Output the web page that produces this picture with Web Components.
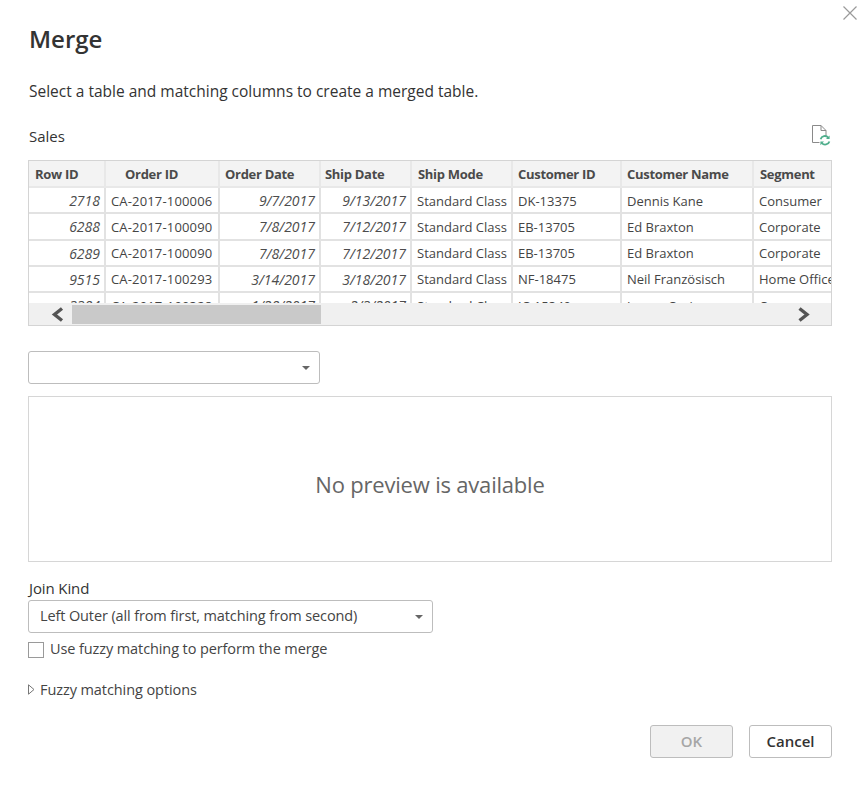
<!DOCTYPE html>
<html>
<head>
<meta charset="utf-8">
<title>Merge</title>
<style>
  html, body { margin: 0; padding: 0; background: #fff; }
  body { font-family: "Open Sans", "Noto Sans", sans-serif; color: #333; }
</style>
</head>
<body>
<merge-dialog heading="Merge" note="Select a table and matching columns to create a merged table.">
  <span slot="source">Sales</span>
  <data-preview slot="table"></data-preview>
  <combo-box slot="column" style="width:292px"></combo-box>
  <combo-box slot="kind" style="width:405px" value="Left Outer (all from first, matching from second)"></combo-box>
  <check-row slot="fuzzy" label="Use fuzzy matching to perform the merge"></check-row>
  <disclosure-row slot="options" label="Fuzzy matching options"></disclosure-row>
  <dialog-button slot="actions" disabled>OK</dialog-button>
  <dialog-button slot="actions">Cancel</dialog-button>
</merge-dialog>

<script>
const COLS = [
  { name: 'Row ID', w: 77, num: true, head: 6 },
  { name: 'Order ID', w: 114, head: 19, code: true },
  { name: 'Order Date', w: 101, num: true, head: 5 },
  { name: 'Ship Date', w: 91, num: true, head: 4 },
  { name: 'Ship Mode', w: 101, head: 6 },
  { name: 'Customer ID', w: 109, head: 5 },
  { name: 'Customer Name', w: 132, head: 5 },
  { name: 'Segment', w: 110, head: 6 }
];
const ROWS = [
  ['2718', 'CA-2017-100006', '9/7/2017', '9/13/2017', 'Standard Class', 'DK-13375', 'Dennis Kane', 'Consumer'],
  ['6288', 'CA-2017-100090', '7/8/2017', '7/12/2017', 'Standard Class', 'EB-13705', 'Ed Braxton', 'Corporate'],
  ['6289', 'CA-2017-100090', '7/8/2017', '7/12/2017', 'Standard Class', 'EB-13705', 'Ed Braxton', 'Corporate'],
  ['9515', 'CA-2017-100293', '3/14/2017', '3/18/2017', 'Standard Class', 'NF-18475', 'Neil Französisch', 'Home Office'],
  ['3384', 'CA-2017-100328', '1/28/2017', '2/3/2017', 'Standard Class', 'JC-15340', 'Jasper Cacioppo', 'Consumer']
];

class MergeDialog extends HTMLElement {
  constructor() {
    super();
    this.attachShadow({mode: 'open'});
    this.shadowRoot.innerHTML = `
    <style>
      :host { display: block; position: relative; box-sizing: border-box; width: 862px; height: 790px; padding: 0 30px 0 28px; }
      h1 { margin: 0; padding: 20px 0 0 1px; height: 37px; line-height: 37px; font-size: 24px; font-weight: 600; color: #333; }
      .note { margin-top: 23px; padding-left: 1px; height: 22px; line-height: 22px; font-size: 15.5px; }
      .source { margin-top: 22px; padding-left: 1px; height: 24px; display: flex; justify-content: space-between; align-items: center; font-size: 15px; }
      .source svg { display: block; margin: -2px 1px 0 0; }
      .table { margin-top: 12px; }
      .column { margin-top: 25px; }
      .preview { margin-top: 12px; box-sizing: border-box; height: 166px; padding-top: 10px; border: 1px solid #d6d6d6; display: flex; align-items: center; justify-content: center; font-size: 22px; color: #666; letter-spacing: -.2px; }
      .kind-label { margin-top: 15px; padding-left: 1px; height: 22px; line-height: 22px; font-size: 15px; letter-spacing: -.12px; }
      .kind { margin-top: 1px; }
      .fuzzy { margin-top: 6px; }
      .options { margin-top: 19px; }
      .actions { margin-top: 25px; display: flex; justify-content: flex-end; gap: 16px; }
      .close { position: absolute; top: 6px; right: 5px; width: 14px; height: 14px; display: block; }
    </style>
    <svg class="close" viewBox="0 0 14 14"><path d="M.5.5l13 13M13.5.5l-13 13" fill="none" stroke="#9a9a9a" stroke-width="1.2"/></svg>
    <h1></h1>
    <div class="note"></div>
    <div class="source">
      <slot name="source"></slot>
      <svg width="19" height="21" viewBox="0 0 19 21">
        <path d="M.5.5h8.5l5 5v6M9 .5v5h5M.5.5v17h7" fill="none" stroke="#8a8a8a"/>
        <path d="M8.6 14.2a4.4 4.4 0 0 1 7.6-1.6M17.4 16.4a4.4 4.4 0 0 1-7.6 1.6" fill="none" stroke="#4fae8c" stroke-width="1.8"/>
        <path d="M17.6 10.4v3.6H14zM8.4 20.2v-3.6H12z" fill="#4fae8c"/>
      </svg>
    </div>
    <div class="table"><slot name="table"></slot></div>
    <div class="column"><slot name="column"></slot></div>
    <div class="preview">No preview is available</div>
    <div class="kind-label">Join Kind</div>
    <div class="kind"><slot name="kind"></slot></div>
    <div class="fuzzy"><slot name="fuzzy"></slot></div>
    <div class="options"><slot name="options"></slot></div>
    <div class="actions"><slot name="actions"></slot></div>
    `;
  }

  connectedCallback() {
    this.shadowRoot.querySelector('h1').textContent = this.getAttribute('heading');
    this.shadowRoot.querySelector('.note').textContent = this.getAttribute('note');
  }
}

class DataPreview extends HTMLElement {
  constructor() {
    super();
    this.attachShadow({mode: 'open'});
    const template = COLS.map(c => c.w + 'px').join(' ');
    const head = COLS.map(c => `<div class="th" style="padding-left:${c.head}px">${c.name}</div>`).join('');
    const body = ROWS.map(r => r.map((v, i) =>
      `<div class="td${COLS[i].num ? ' num' : ''}${COLS[i].code ? ' code' : ''}">${v}</div>`).join('')).join('');
    this.shadowRoot.innerHTML = `
    <style>
      :host { display: block; box-sizing: border-box; width: 804px; height: 166px; border: 1px solid #d4d4d4; font-size: 13px; color: #444; }
      .view { height: 142px; overflow: hidden; }
      .grid { display: grid; grid-template-columns: ${template}; grid-auto-rows: 26.25px; grid-template-rows: 27px; width: max-content; }
      .th, .td { box-sizing: border-box; white-space: nowrap; overflow: hidden; border-right: 2px solid #e2e2e2; border-bottom: 2px solid #e2e2e2; display: flex; align-items: center; }
      .th { padding-top: 1px; background: #f3f3f3; font-weight: 700; color: #4a4a4a; letter-spacing: -.3px; border-right-color: #e8e8e8; border-bottom-color: #e8e8e8; }
      .td { padding: 1px 4px 0 5px; }
      .num { justify-content: flex-end; font-style: italic; font-size: 14px; color: #4c4c4c; }
      .code { letter-spacing: .16px; }
      .bar { height: 22px; background: #f0f0f0; display: flex; align-items: center; }
      .bar svg { display: block; flex: none; }
      .thumb { width: 249px; height: 19px; background: #c9c9c9; flex: none; }
      .spacer { flex: 1; }
    </style>
    <div class="view"><div class="grid">${head}${body}</div></div>
    <div class="bar">
      <svg width="43" height="22" viewBox="0 0 43 22"><path d="M33 5.5l-7.5 6 7.5 6" fill="none" stroke="#555" stroke-width="3.4"/></svg>
      <div class="thumb"></div>
      <div class="spacer"></div>
      <svg width="43" height="22" viewBox="0 0 43 22"><path d="M11.5 5.5l7.5 6-7.5 6" fill="none" stroke="#555" stroke-width="3.4"/></svg>
    </div>
    `;
  }
}

class ComboBox extends HTMLElement {
  constructor() {
    super();
    this.attachShadow({mode: 'open'});
    this.shadowRoot.innerHTML = `
    <style>
      :host { display: block; box-sizing: border-box; height: 33px; border: 1px solid #bdbdbd; border-radius: 3px; font-size: 14.5px; color: #444; }
      .inner { box-sizing: border-box; height: 100%; display: flex; align-items: center; justify-content: space-between; padding: 0 9px 0 11px; letter-spacing: -.12px; }
      .value { margin-top: -2px; }
      .arrow { width: 0; height: 0; border: 4px solid transparent; border-top: 4px solid #666; border-bottom: 0; }
    </style>
    <div class="inner"><span class="value"></span><span class="arrow"></span></div>
    `;
  }

  connectedCallback() {
    this.shadowRoot.querySelector('.value').textContent = this.getAttribute('value') || '';
  }
}

class CheckRow extends HTMLElement {
  constructor() {
    super();
    this.attachShadow({mode: 'open'});
    this.shadowRoot.innerHTML = `
    <style>
      :host { display: flex; align-items: center; gap: 6px; height: 20px; font-size: 14.5px; color: #444; letter-spacing: -.1px; }
      .box { box-sizing: border-box; width: 16px; height: 16px; border: 1px solid #9a9a9a; margin-top: 2px; }
      .label { margin-top: -1px; }
    </style>
    <span class="box"></span><span class="label"></span>
    `;
  }

  connectedCallback() {
    this.shadowRoot.querySelector('.label').textContent = this.getAttribute('label');
  }
}

class DisclosureRow extends HTMLElement {
  constructor() {
    super();
    this.attachShadow({mode: 'open'});
    this.shadowRoot.innerHTML = `
    <style>
      :host { display: flex; align-items: center; gap: 5px; height: 22px; font-size: 14.5px; color: #444; letter-spacing: -.08px; }
      svg { display: block; flex: none; }
    </style>
    <svg width="7" height="11" viewBox="0 0 7 11"><path d="M.5.8l5.5 4.7-5.5 4.7z" fill="none" stroke="#777"/></svg>
    <span class="label"></span>
    `;
  }

  connectedCallback() {
    this.shadowRoot.querySelector('.label').textContent = this.getAttribute('label');
  }
}

class DialogButton extends HTMLElement {
  constructor() {
    super();
    this.attachShadow({mode: 'open'});
    this.shadowRoot.innerHTML = `
    <style>
      :host { display: flex; align-items: center; justify-content: center; box-sizing: border-box; width: 83px; height: 33px; padding-bottom: 2px; border: 1px solid #bdbdbd; border-radius: 3px; background: #fff; font-size: 15px; font-weight: 600; color: #333; }
      :host([disabled]) { background: #f1f1f1; color: #a6a6a6; }
    </style>
    <slot></slot>
    `;
  }
}

customElements.define('merge-dialog', MergeDialog);
customElements.define('data-preview', DataPreview);
customElements.define('combo-box', ComboBox);
customElements.define('check-row', CheckRow);
customElements.define('disclosure-row', DisclosureRow);
customElements.define('dialog-button', DialogButton);
</script>
</body>
</html>
